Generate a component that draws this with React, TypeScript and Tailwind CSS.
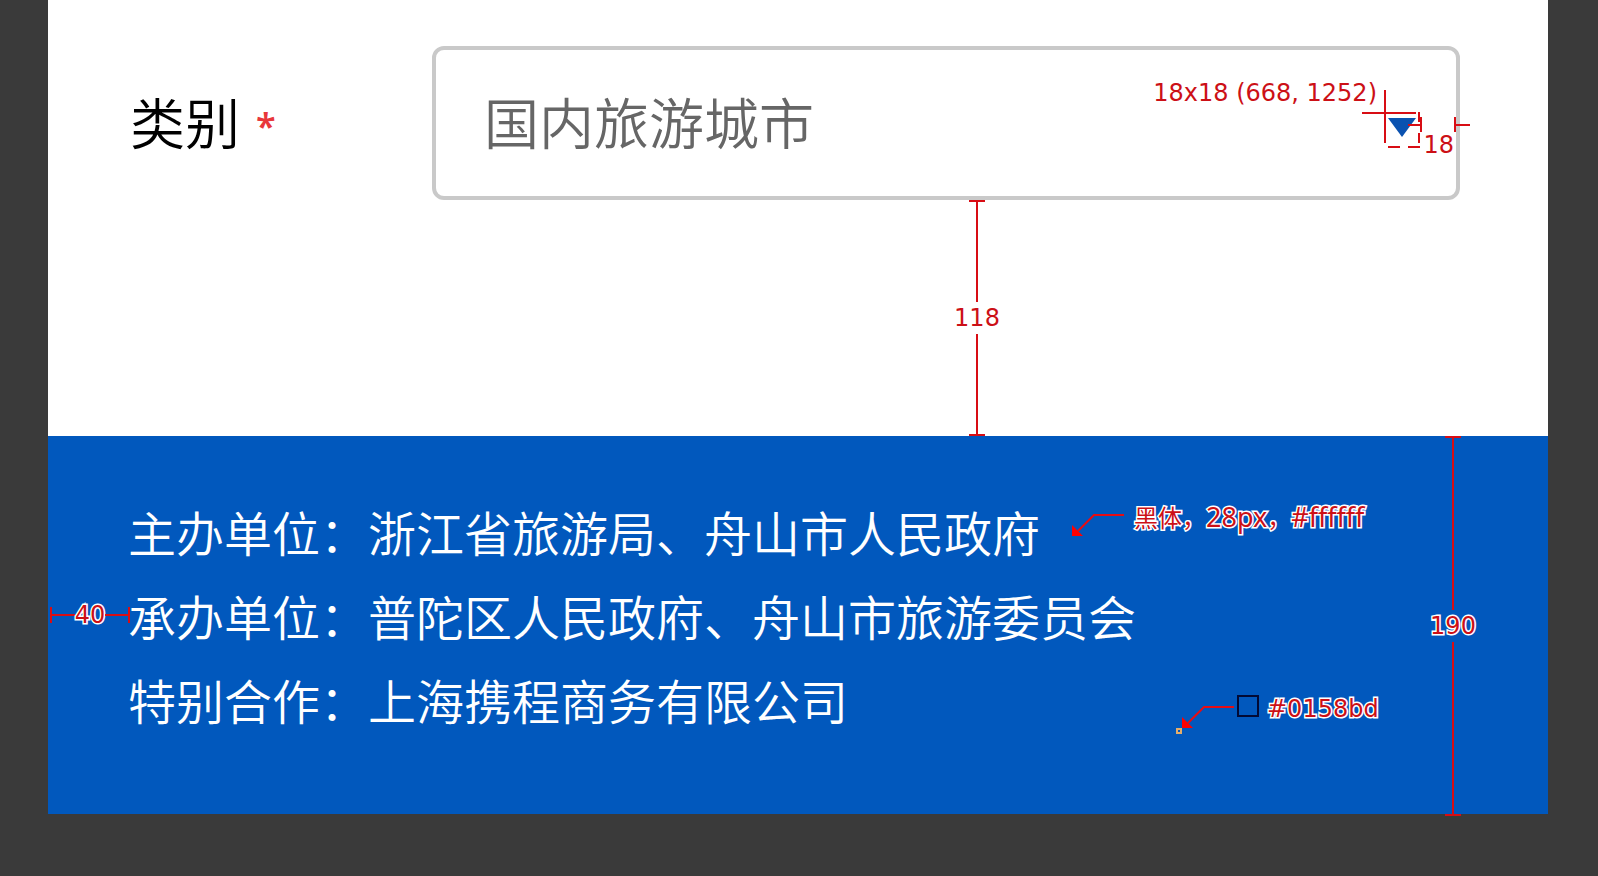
import type { ReactNode } from "react";

const hanzi = "font-['Noto_Sans_CJK_SC',sans-serif]";
const note = "whitespace-nowrap font-['DejaVu_Sans',sans-serif] text-2xl leading-8 text-[#cc1016]";
const outlined = "[-webkit-text-stroke:3px_white] [paint-order:stroke_fill]";

const credits = [
  { role: "主办单位", names: "浙江省旅游局、舟山市人民政府" },
  { role: "承办单位", names: "普陀区人民政府、舟山市旅游委员会" },
  { role: "特别合作", names: "上海携程商务有限公司" },
];

function Leader() {
  return (
    <svg aria-hidden="true" className="mt-[13px] overflow-visible" width="52" height="22" fill="none">
      <path d="M52 1H22L6 17" stroke="#e80c12" strokeWidth="2" />
      <path d="M0 11V22H11Z" fill="#ff0000" />
    </svg>
  );
}

function VerticalMeasure({ className, children }: { className: string; children: ReactNode }) {
  return (
    <div className={`absolute flex w-14 flex-col items-center ${className}`}>
      <span className="h-0.5 w-4 bg-[#d80d14]" />
      <span className="w-0.5 flex-1 bg-[#d80d14]" />
      {children}
      <span className="w-0.5 flex-1 bg-[#d80d14]" />
      <span className="h-0.5 w-4 bg-[#d80d14]" />
    </div>
  );
}

function CategoryField() {
  return (
    <div className="flex items-center pt-[46px] pr-[88px] pl-[82px]">
      <label htmlFor="category" className="flex w-[302px] shrink-0 items-center gap-4 pb-1.5 text-[55px] leading-[84px] font-[350] text-black">
        类别
        <span className="pt-3 font-['Noto_Sans',sans-serif] text-4xl leading-[60px] font-semibold text-[#e8373a]">*</span>
      </label>
      <div className="relative flex-1">
        <select
          id="category"
          className="block h-[154px] w-full appearance-none rounded-xl border-4 border-[#c9c9c9] bg-white pb-1.5 pl-12 text-[55px] font-[350] text-[#666]"
        >
          <option>国内旅游城市</option>
        </select>
        <svg
          aria-hidden="true"
          className="pointer-events-none absolute top-11 -right-2.5 overflow-visible"
          width="108"
          height="60"
          fill="none"
        >
          <path d="M26 28H54L40 47Z" fill="#0a52b0" />
          <path
            d="M0 23H54M23 0V53M57 22V32M57 43V53M26 57H38M46 57H58M46 35H60M59 27V42M93 27V42M93 35H108"
            stroke="#d80d14"
            strokeWidth="2"
          />
        </svg>
        <span className={`${note} absolute top-[31px] right-[83px]`}>18x18 (668, 1252)</span>
        <span className={`${note} absolute top-[83px] right-1.5`}>18</span>
      </div>
    </div>
  );
}

function Footer() {
  return (
    <footer className="relative h-[378px] bg-[#0158bd] pt-[53px] pl-20">
      {credits.map((c) => (
        <p key={c.role} className="text-5xl leading-[84px] font-[350] text-white">
          {c.role}：{c.names}
        </p>
      ))}

      <div className="absolute top-[65px] left-[1024px] flex items-start gap-2.5">
        <Leader />
        <span className={`${note} ${outlined} flex items-center`}>
          <span className={hanzi}>黑体，</span>
          <span className="font-['Noto_Sans',sans-serif] text-[27px]">28px</span>
          <span className={hanzi}>，</span>
          <span className="font-['Noto_Sans',sans-serif] text-[27px]">#ffffff</span>
        </span>
      </div>

      <div className="absolute top-[257px] left-[1128px] flex items-start">
        <span className="mt-[35px] size-1.5 border-2 border-[#e3ad6b]" />
        <Leader />
        <span className="mt-0.5 mr-2 ml-[3px] size-[22px] border-2 border-[#020a35]" />
        <span className={`${note} ${outlined}`}>#0158bd</span>
      </div>

      <div className="absolute top-[163px] left-0.5 flex w-20 items-center">
        <span className="h-4 w-0.5 bg-[#d80d14]" />
        <span className="h-0.5 flex-1 bg-[#d80d14]" />
        <span className={`${note} ${outlined}`}>40</span>
        <span className="h-0.5 flex-1 bg-[#d80d14]" />
        <span className="h-4 w-0.5 bg-[#d80d14]" />
      </div>

      <VerticalMeasure className="top-0 right-[67px] -bottom-0.5">
        <span className={`${note} ${outlined}`}>190</span>
      </VerticalMeasure>
    </footer>
  );
}

export default function App() {
  return (
    <div className={`min-h-screen bg-[#3a3a3a] pr-[50px] pl-12 ${hanzi}`}>
      <main className="bg-white">
        <CategoryField />
        <div className="relative h-[236px]">
          <VerticalMeasure className="inset-y-0 right-[543px]">
            <span className={note}>118</span>
          </VerticalMeasure>
        </div>
        <Footer />
      </main>
    </div>
  );
}
